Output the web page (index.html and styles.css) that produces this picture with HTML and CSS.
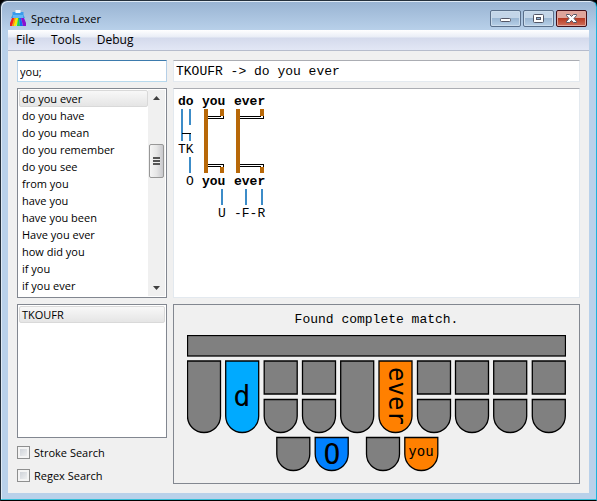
FILE: index.html
```html
<!DOCTYPE html>
<html lang="en">
<head>
<meta charset="utf-8">
<title>Spectra Lexer</title>
<link rel="stylesheet" href="styles.css">
</head>
<body>
<div class="window">
  <header class="titlebar">
    <svg class="logo" width="16" height="16" viewBox="0 0 16 16" aria-hidden="true">
      <path d="M2.500 2h11v3l1.500 3H1l1.500-3z" fill="#3a9cec"/>
      <path d="M5.500 0h5v3h-5z" fill="#f4f8fc"/>
      <path d="M3 5h10v3H3z" fill="#62b8f6"/>
      <path d="M2 8h3L2 16H0v-3z" fill="#e8202a"/>
      <path d="M4 8h2L4 16H2z" fill="#ff9a00"/>
      <path d="M6 8h2v3L6 16H4z" fill="#f4ee00"/>
      <path d="M8 8h1l1 8H7z" fill="#18d050"/>
      <path d="M9 8h2l2 8h-3z" fill="#1468f0"/>
      <path d="M11 8h3l2 5v3h-3z" fill="#8a10d0"/>
    </svg>
    <h1 class="title">Spectra Lexer</h1>
    <div class="controls">
      <button class="control" type="button" aria-label="Minimize">
        <svg width="13" height="11" viewBox="0 0 13 11"><rect x="1.500" y="5.500" width="10" height="3" rx="1" fill="#fff" stroke="#535666"/></svg>
      </button>
      <button class="control" type="button" aria-label="Maximize">
        <svg width="13" height="11" viewBox="0 0 13 11"><rect x="1.500" y="1.500" width="10" height="8" rx="1" fill="#fff" stroke="#535666"/><rect x="4.500" y="4.500" width="4" height="2" fill="#8fb3d6" stroke="#535666"/></svg>
      </button>
      <button class="control close" type="button" aria-label="Close">
        <svg width="13" height="11" viewBox="0 0 13 11"><path d="M1.500 1.500h3l2 2 2-2h3v1L9 5.500l2.500 3v1h-3l-2-2-2 2h-3v-1L4 5.500l-2.500-3z" fill="#fff" stroke="#535666"/></svg>
      </button>
    </div>
  </header>
  <div class="client">
    <nav class="menu">
      <button type="button">File</button>
      <button type="button">Tools</button>
      <button type="button">Debug</button>
    </nav>
    <main class="content">
      <section class="left">
        <input class="search" type="text" value="you;" aria-label="Search">
        <div class="list matches">
          <ul>
            <li class="selected">do you ever</li>
            <li>do you have</li>
            <li>do you mean</li>
            <li>do you remember</li>
            <li>do you see</li>
            <li>from you</li>
            <li>have you</li>
            <li>have you been</li>
            <li>Have you ever</li>
            <li>how did you</li>
            <li>if you</li>
            <li>if you ever</li>
          </ul>
          <div class="scrollbar">
            <svg width="7" height="4" viewBox="0 0 7 4"><path d="M0 4 3.500 0 7 4z" fill="#404040"/></svg>
            <div class="thumb"></div>
            <svg width="7" height="4" viewBox="0 0 7 4"><path d="M0 0h7L3.500 4z" fill="#404040"/></svg>
          </div>
        </div>
        <div class="list strokes">
          <ul><li class="selected">TKOUFR</li></ul>
        </div>
        <label class="option"><input type="checkbox">Stroke Search</label>
        <label class="option"><input type="checkbox">Regex Search</label>
      </section>
      <section class="right">
        <input class="translation" type="text" value="TKOUFR -&gt; do you ever" aria-label="Translation">
        <div class="graph">
          <svg width="96" height="128" viewBox="0 0 96 128">
            <g class="strong">
              <text x="0" y="12">do</text><text x="24" y="12">you</text><text x="56" y="12">ever</text>
              <text x="24" y="92">you</text><text x="56" y="92">ever</text>
            </g>
            <text x="0" y="60">TK</text><text x="8" y="92">O</text>
            <text x="40" y="124">U</text><text x="56" y="124">-F-R</text>
            <path class="link" d="M4 16v32M12 16v16M12 41v7M12 64v16M44 96v16M68 96v16M84 96v16"/>
            <path class="joint" d="M4 40.500h9"/>
            <path class="bar" d="M28 16v64M44 16v7M44 74v6M60 16v64M84 16v7M84 74v6"/>
            <path class="joint" d="M30 23.500h13M30 25.500h16M30 71.500h16M30 73.500h13M62 23.500h21M62 25.500h24M62 71.500h24M62 73.500h21M45.500 23v3M45.500 71v3M85.500 23v3M85.500 71v3"/>
          </svg>
        </div>
        <div class="board">
          <p>Found complete match.</p>
          <svg class="keys" viewBox="0 0 379 137" role="img" aria-label="Steno board">
            <defs>
              <path id="long" d="M.5.5h33v55a16.500 16.500 0 0 1-33 0z"/>
              <path id="square" d="M.5.5h33v33H.5z"/>
              <path id="short" d="M.5.5h33v16.500a16.500 16.500 0 0 1-33 0z"/>
            </defs>
            <rect x=".5" y=".5" width="378" height="20.500"/>
            <use href="#long" x="0" y="25.500"/>
            <use href="#long" x="38.200" y="25.500" fill="#00aaff"/>
            <use href="#square" x="76.700" y="25.500"/><use href="#short" x="76.700" y="64"/>
            <use href="#square" x="115" y="25.500"/><use href="#short" x="115" y="64"/>
            <use href="#long" x="153.200" y="25.500"/>
            <use href="#long" x="191.500" y="25.500" fill="#ff8000"/>
            <use href="#square" x="230" y="25.500"/><use href="#short" x="230" y="64"/>
            <use href="#square" x="268" y="25.500"/><use href="#short" x="268" y="64"/>
            <use href="#square" x="306.200" y="25.500"/><use href="#short" x="306.200" y="64"/>
            <use href="#square" x="344.800" y="25.500"/><use href="#short" x="344.800" y="64"/>
            <use href="#short" x="89.300" y="102"/>
            <use href="#short" x="127.700" y="102" fill="#0080ff"/>
            <use href="#short" x="179" y="102"/>
            <use href="#short" x="217.300" y="102" fill="#ff8000"/>
            <text class="big" x="55" y="71">d</text>
            <text class="big" x="145" y="129">O</text>
            <text class="small" x="234" y="121">you</text>
            <text class="mid" transform="translate(202 61) rotate(90)">ever</text>
          </svg>
        </div>
      </section>
    </main>
  </div>
</div>
</body>
</html>
```
FILE: styles.css
```css
* { box-sizing: border-box; }
body {
  margin: 0;
  background: #000;
  font: 11px/17px "Open Sans", "Noto Sans", sans-serif;
  color: #000;
}
button, input { font: inherit; color: inherit; }
.window {
  display: flex;
  flex-direction: column;
  min-height: 100vh;
  padding: 0 7px 7px;
  border: 1px solid #24303c;
  border-right-color: #1cb4dc;
  border-bottom: 1px solid #000;
  border-radius: 7px 7px 0 0;
  background: linear-gradient(#98b3d2, #b9d1ea 30px, #b9d1ea);
  box-shadow: inset 0 -1px #35bfd8, inset 1px 1px #dfeaf5;
}
.titlebar { display: flex; align-items: center; height: 29px; padding: 0 2px; gap: 5px; }
.logo { margin-top: 5px; }
.title { flex: 1; margin: 6px 0 0; font-size: 11px; font-weight: 400; }
.controls { display: flex; gap: 2px; padding-top: 5px; }
.control {
  display: flex;
  align-items: center;
  justify-content: center;
  width: 31px;
  height: 17px;
  padding: 0;
  border: 1px solid #5a6f8a;
  border-radius: 2px;
  background: linear-gradient(#c3d5e8 50%, #9bb7d3 50%, #b8d0e8);
  box-shadow: inset 0 0 0 1px #cbdcec;
}
.close {
  border-color: #43101a;
  background: linear-gradient(#dfa59b 45%, #b83a22 50%, #d0705c);
  box-shadow: inset 0 0 0 1px #e2a79d;
}
.client { flex: 1; display: flex; flex-direction: column; background: #f0f0f0; }
.menu {
  display: flex;
  height: 21px;
  border-bottom: 1px solid #b6bccc;
  background: linear-gradient(#fff, #e9edf6 7px, #d4daec 8px, #e2e7f5);
}
.menu button { padding: 0 8px; border: 0; background: none; font-size: 12px; line-height: 20px; }
.content {
  flex: 1;
  display: grid;
  grid-template-columns: 150px 1fr;
  gap: 6px;
  padding: 9px;
}
.left, .right { display: flex; flex-direction: column; gap: 6px; min-width: 0; }
.search, .translation {
  width: 100%;
  height: 22px;
  padding: 2px;
  border: 1px solid #e3e9ef;
  border-top-color: #abadb3;
  background: #fff;
}
.search { border-color: #3d7bad #b5cfe7 #b7d9ed; }
.translation { font: 13px/16px "Liberation Mono", monospace; }
.list { display: flex; padding: 1px; border: 1px solid #828790; background: #fff; }
.matches { height: 210px; }
.strokes { height: 134px; }
.list ul { flex: 1; margin: 0; padding: 0; list-style: none; }
.list li { height: 17px; padding: 0 3px; line-height: 17px; }
.list .selected {
  border: 1px solid #d9d9d9;
  border-radius: 2px;
  padding: 0 2px;
  line-height: 15px;
  background: linear-gradient(#f8f8f8, #e5e5e5);
}
.scrollbar {
  display: flex;
  flex-direction: column;
  align-items: center;
  width: 17px;
  padding: 6px 0;
  background: #f0f0f0;
}
.scrollbar svg:last-child { margin-top: auto; }
.thumb {
  display: flex;
  width: 15px;
  height: 34px;
  margin-top: 44px;
  border: 1px solid #979797;
  border-radius: 2px;
  background: linear-gradient(90deg, #f5f5f5, #e6e6e6 50%, #c8c8cc);
}
.thumb::before {
  content: "";
  width: 7px;
  height: 8px;
  margin: auto;
  background: repeating-linear-gradient(#555 0 2px, #eee 2px 3px);
}
.option { display: flex; align-items: center; gap: 4px; height: 17px; }
.option input {
  appearance: none;
  width: 13px;
  height: 13px;
  margin: 0;
  border: 1px solid #8e8f8f;
  background: linear-gradient(135deg, #c6cbd2, #f6f6f6);
  box-shadow: inset 0 0 0 2px #f4f4f4;
}
.graph {
  height: 210px;
  padding: 4px;
  border: 1px solid #e3e9ef;
  border-top-color: #abadb3;
  background: #fff;
}
.graph svg { display: block; }
.graph text { font: 13px "Liberation Mono", monospace; }
.graph .strong text { font-weight: 700; }
.graph path { fill: none; }
.graph .link { stroke: #3c8cc8; stroke-width: 2; }
.graph .bar { stroke: #b86808; stroke-width: 4; }
.graph .joint { stroke: #000; stroke-width: 1; }
.board { flex: 1; padding: 7px 13px 6px; border: 1px solid #828790; }
.board p { margin: 0 0 7px; font: 13px/16px "Liberation Mono", monospace; text-align: center; }
.keys { display: block; width: 100%; fill: #808080; stroke: #000; stroke-width: 1.3; }
.keys text { fill: #000; stroke: none; font-family: "DejaVu Sans Mono", monospace; text-anchor: middle; }
.keys .big { font-size: 28px; }
.keys .mid { font-size: 24px; }
.keys .small { font-size: 14px; }
```
